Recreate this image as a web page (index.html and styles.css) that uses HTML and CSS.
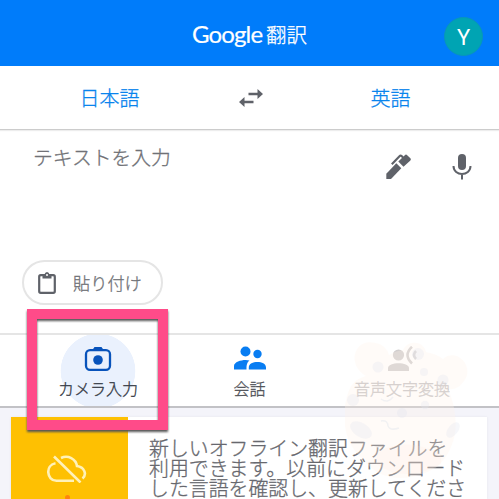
FILE: index.html
```
<!DOCTYPE html>
<html lang="ja">
<head>
<meta charset="utf-8">
<title>Google 翻訳</title>
<link rel="stylesheet" href="styles.css">
</head>
<body>
<div class="app">
  <header class="header">
    <h1 class="title"><span class="brand">Google</span><span class="product">翻訳</span></h1>
    <div class="avatar">Y</div>
  </header>
  <nav class="languages">
    <span class="lang source">日本語</span>
    <svg class="swap" width="24" height="18" viewBox="0 0 24 18" fill="none" stroke="#5f6269" stroke-width="2.4"><path d="M9.500 5H19M14.500 13H5"/><path d="M18.500 0L24 5L18.500 10ZM5.500 8L0 13L5.500 18Z" fill="#5f6269" stroke="none"/></svg>
    <span class="lang target">英語</span>
  </nav>
  <section class="input">
    <div class="input-row">
      <span class="placeholder">テキストを入力</span>
      <svg class="pen" width="26" height="26" viewBox="0 0 26 26"><path d="M.3 25V19.800L10.300 9.300L15.300 14.300L5 25Z" fill="#5f6269"/><path d="M12.300 7.500L18.800 1.200Q20 0 21.200 1.200L24.400 4.200Q25.400 5.300 24.400 6.500L17.500 12.700Z" fill="#5f6269"/><path d="M5.800 10.300L13.500 2.200Q14.500 1.200 15.800 2.200L17.500 4" fill="none" stroke="#5f6269" stroke-width="2.100"/></svg>
      <svg class="mic" width="20" height="26" viewBox="0 0 20 26"><rect x="6" y="0" width="8" height="16" rx="4" fill="#5f6269"/><path d="M1.500 12C1.500 22.500 18.500 22.500 18.500 12M10 20V25.500" fill="none" stroke="#5f6269" stroke-width="2"/></svg>
    </div>
    <div class="chip">
      <svg width="18" height="22" viewBox="0 0 18 22"><rect x="1.200" y="3.200" width="15.600" height="17.600" rx="1.500" fill="none" stroke="#5f6269" stroke-width="2.200"/><path d="M4.500 2.500H6.500Q7 0 9 0T11.500 2.500H13.500V6.500H4.500Z" fill="#5f6269"/><circle cx="9" cy="3" r="1" fill="#fff"/></svg>
      <span>貼り付け</span>
    </div>
  </section>
  <section class="modes">
    <div class="mode camera">
      <svg width="28" height="26" viewBox="0 0 28 26"><rect x="2" y="4.200" width="24" height="19.600" rx="4" fill="none" stroke="#0853bb" stroke-width="2.300"/><path d="M8 4.500L10.500 1H17.500L20 4.500Z" fill="#0853bb"/><circle cx="14" cy="14" r="4.800" fill="#0853bb"/></svg>
      <span>カメラ入力</span>
    </div>
    <div class="mode talk">
      <svg width="34" height="26" viewBox="0 0 34 26" fill="#087df2"><circle cx="12.500" cy="5.500" r="5"/><circle cx="24.500" cy="8" r="4.200"/><path d="M1 23.500V20C1 16 8 14 12.500 14Q15 14 16.500 14.500C14 16.500 13.500 18.500 13.500 23.500ZM15.800 23.500V21.500C15.800 14.300 33 14.300 33 21.500V23.500Z"/></svg>
      <span>会話</span>
    </div>
    <div class="mode transcribe">
      <svg width="30" height="26" viewBox="0 1 30 26"><g fill="#d1cece"><circle cx="11.500" cy="10" r="5.600"/><path d="M1 26V23C1 16.500 22 16.500 22 23V26Z"/></g><path d="M25 1.800Q16 10 25 18.500M29 6Q25 10 29 14" fill="none" stroke="#d1cece" stroke-width="2.600"/></svg>
      <span>音声文字変換</span>
    </div>
  </section>
  <main class="feed">
    <article class="card">
      <div class="thumb">
        <svg width="40" height="28" viewBox="0 0 40 28" fill="none" stroke="#fff1b8" stroke-width="2.600"><path d="M8.500 8.200C-2 10-.5 25.800 9.500 25.800H27M14 3C21-.5 29 4 30 11C37 12 40.500 19 35.500 23.500M7 1.500L33.500 27.500"/></svg>
        <i class="dot"></i>
      </div>
      <p class="message">新しいオフライン翻訳ファイルを<br>利用できます。以前にダウンロード<br>した言語を確認し、更新してくださ</p>
    </article>
  </main>
  <svg class="mascot" width="130" height="145" viewBox="0 0 130 145">
    <path d="M21 36C1 25 9-3 31 3Q41 5 44 15Q50 11 58 10C63-1 79 1 81 12Q92 14 98 19C112 7 130 27 119 41Q112 51 103 49C111 67 119 102 92 127C58 147 30 137 18 119C-5 101-4 66 6 46Q12 38 21 36Z" fill="#fff3e8" fill-opacity=".3"/>
    <path d="M32 112Q62 96 96 114V124Q60 144 31 124Z" fill="#ffe0d4" fill-opacity=".14"/>
    <g fill="#e0e6f0" fill-opacity=".3"><circle cx="33" cy="27" r="5.500"/><circle cx="73" cy="14" r="6"/><circle cx="79" cy="32" r="4"/><circle cx="98" cy="40" r="5.500"/><circle cx="8" cy="60" r="6"/><circle cx="80" cy="65" r="4.200"/><circle cx="57" cy="73" r="5"/><ellipse cx="16" cy="90" rx="12" ry="7" transform="rotate(32 16 90)"/><ellipse cx="108" cy="90" rx="5" ry="9" transform="rotate(38 108 90)"/></g>
    <path d="M36 81Q43 80 43 86Q45 91 54 88M36 59Q43 64 48 57" fill="none" stroke="#dbe4ec" stroke-opacity=".4" stroke-width="1.500"/>
  </svg>
  <div class="highlight"></div>
</div>
</body>
</html>
```
FILE: styles.css
```
* { box-sizing: border-box; }
body {
  margin: 0;
  background: #f4f4fa;
  color: #707277;
  font-family: "Noto Sans CJK JP", "Noto Sans", sans-serif;
  font-weight: 300;
  -webkit-text-stroke-width: 0.3px;
}
.app {
  position: relative;
  height: 499px;
  display: flex;
  flex-direction: column;
  overflow: hidden;
}
.header {
  position: relative;
  flex: 0 0 66px;
  display: flex;
  justify-content: center;
  padding-top: 20px;
  background: #007cfa;
  color: #fff;
}
.title {
  display: flex;
  align-items: center;
  gap: 5px;
  height: 28px;
  margin: 0;
  font-weight: 400;
  line-height: 28px;
}
.brand {
  width: 69px;
  font-family: Lato, sans-serif;
  font-size: 24px;
  letter-spacing: -0.85px;
  -webkit-text-stroke-width: 0.2px;
}
.product { font-size: 20.5px; font-weight: 300; }
.avatar {
  position: absolute;
  right: 16px;
  top: 17px;
  width: 39px;
  height: 39px;
  border-radius: 50%;
  border: 1px solid #0896ba;
  background: #00a4b3;
  font: 22px/39px Roboto, sans-serif;
  text-align: center;
  -webkit-text-stroke-width: 0;
}
.languages {
  flex: 0 0 64px;
  display: grid;
  grid-template-columns: 219px 63px 1fr;
  align-items: center;
  justify-items: center;
  border-bottom: 1px solid #ccc;
  background: #fff;
  box-shadow: 0 1px 1px #ededed;
  z-index: 1;
}
.lang { font-size: 20px; line-height: 28px; color: #0984ed; }
.input {
  flex: 0 0 203px;
  display: flex;
  flex-direction: column;
  align-items: flex-start;
  justify-content: space-between;
  padding: 13px 27px 28px 22px;
  background: #fff;
}
.input-row { display: flex; align-self: stretch; padding-left: 11px; }
.placeholder { flex: 1; font-size: 19.8px; line-height: 28px; color: #707176; }
.pen { margin: 11px 40px 0 0; }
.mic { margin-top: 11px; }
.chip {
  display: flex;
  align-items: center;
  gap: 17px;
  width: 141px;
  height: 45px;
  padding-left: 14px;
  border: 2px solid #e5e5e5;
  border-radius: 23px;
  font-size: 17.2px;
  line-height: 24px;
}
.modes {
  flex: 0 0 75px;
  display: flex;
  padding-left: 22px;
  background: #fff;
  border-top: 2px solid #e5e5e5;
  border-bottom: 2px solid #c2c2c6;
}
.mode {
  width: 152px;
  display: flex;
  flex-direction: column;
  align-items: center;
  padding-top: 11px;
  font-size: 16px;
  line-height: 24px;
  color: #505258;
}
.mode svg { height: 26px; margin-bottom: 4px; }
.camera {
  color: #343943;
  background: radial-gradient(circle at 76px 36px, #eaf1fd 37px, transparent 37.6px);
}
.talk { width: 151px; }
.transcribe { width: 154px; color: #c4c1c2; }
.feed { flex: 1; padding: 9px 12px 0 11px; }
.card { display: flex; height: 82px; background: #fff; box-shadow: 0 0 2px #e5e5ec; }
.thumb {
  position: relative;
  flex: 0 0 117px;
  padding: 38px 0 0 36px;
  background: #fec002;
}
.dot {
  position: absolute;
  left: 54px;
  top: 78px;
  width: 5px;
  height: 5px;
  border-radius: 50%;
  background: #ff850b;
}
.message {
  margin: 21px 0 0 21px;
  font-size: 19.9px;
  line-height: 20.2px;
  white-space: nowrap;
  color: #67686e;
}
.mascot { position: absolute; left: 345px; top: 340px; z-index: 2; }
.highlight {
  position: absolute;
  left: 27px;
  top: 309px;
  width: 141px;
  height: 121px;
  border: 10px solid #ff4b89;
  z-index: 3;
  filter: drop-shadow(0 2px 1px #555);
}
```
